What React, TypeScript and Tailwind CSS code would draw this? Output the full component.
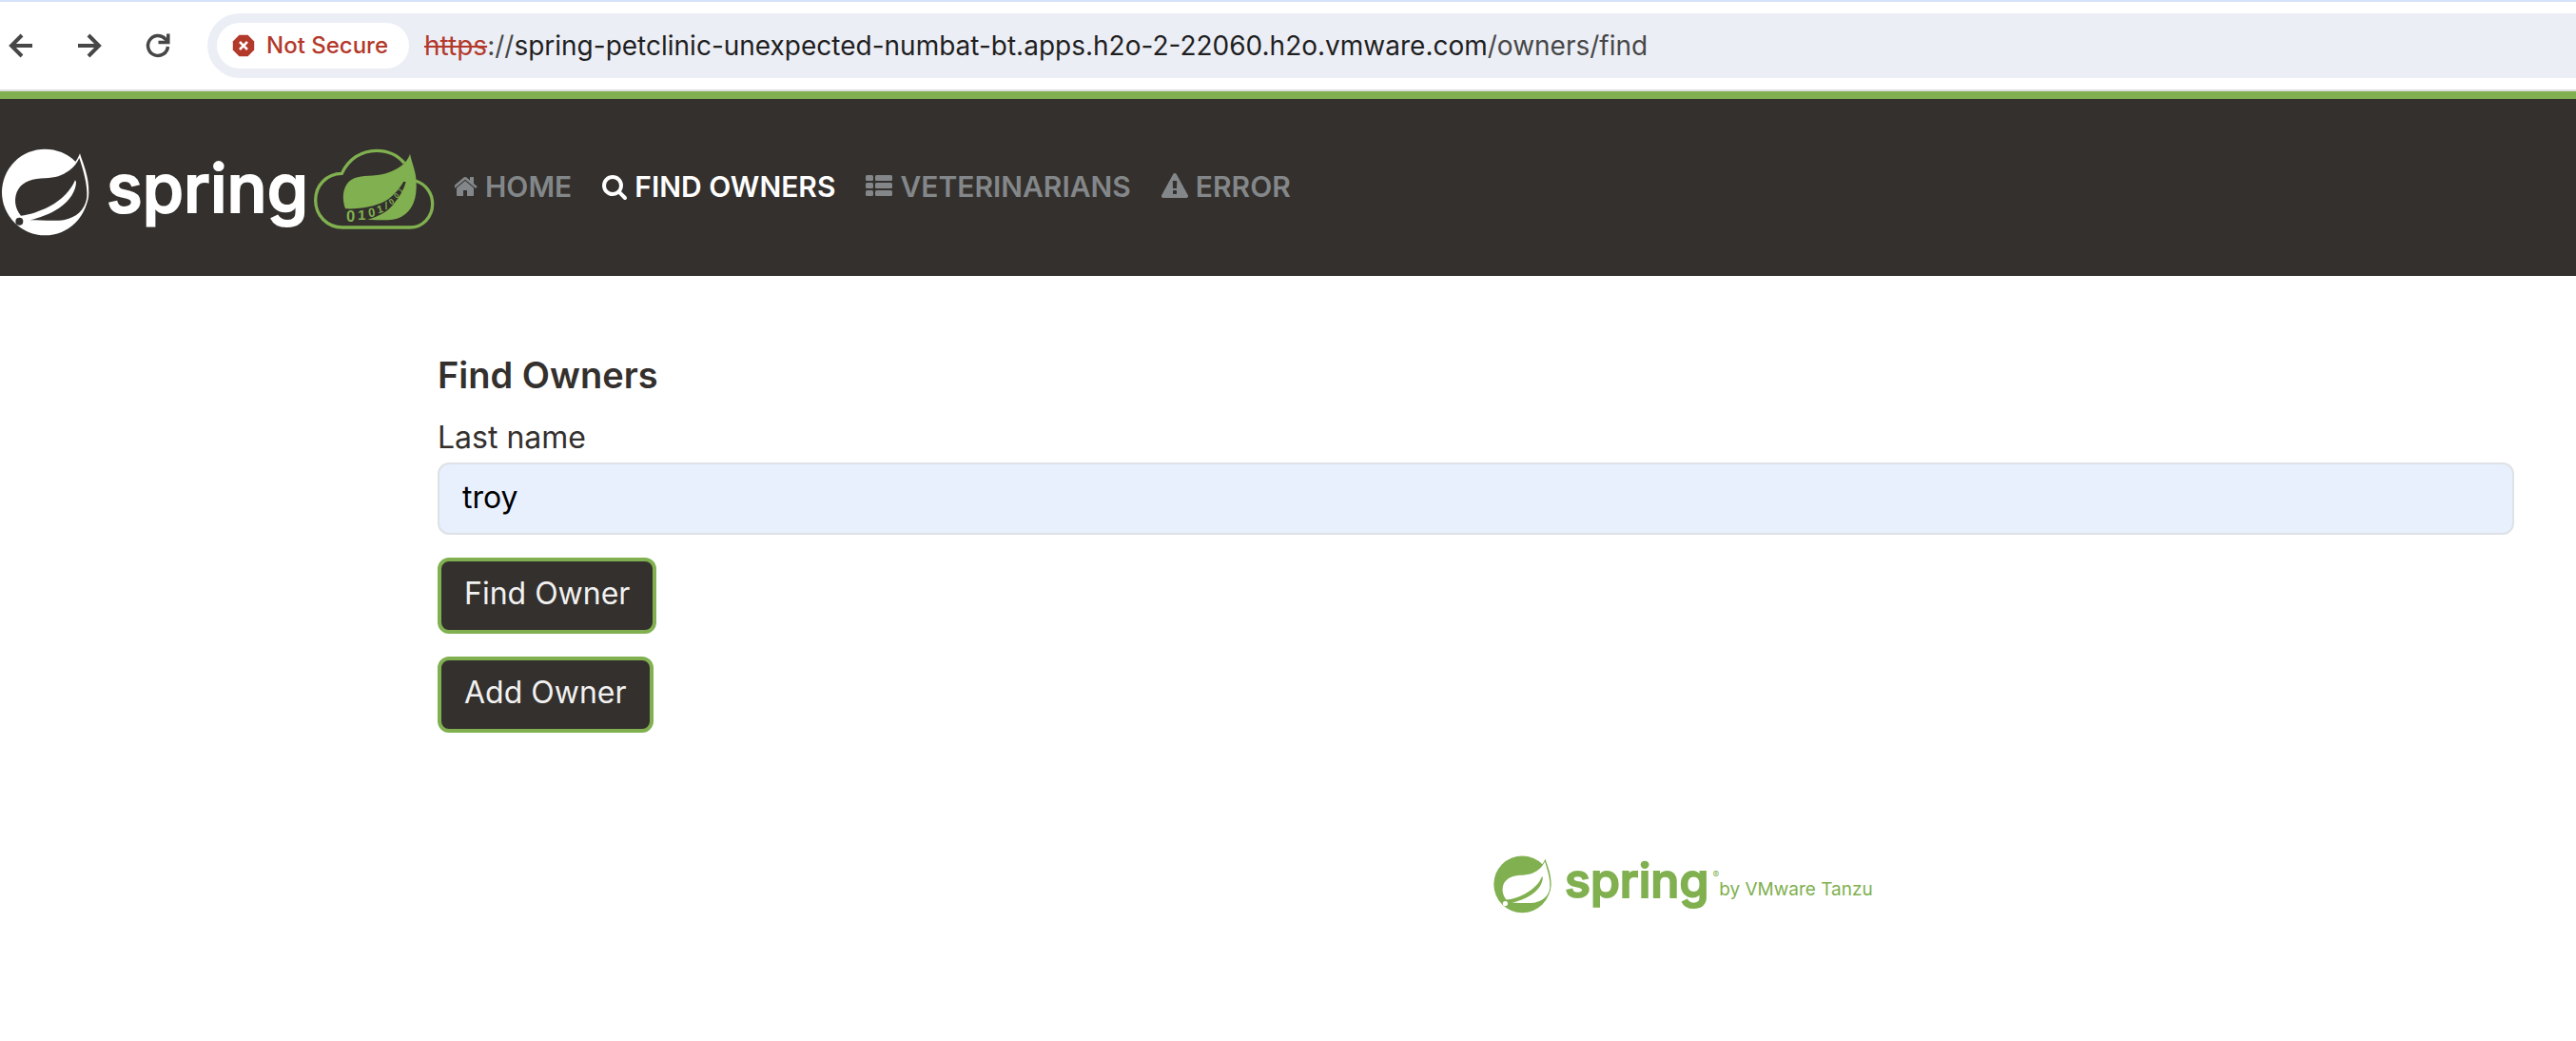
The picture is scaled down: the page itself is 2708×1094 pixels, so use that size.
import React from "react";

type LeafProps = { className?: string; hollow: string };

function SpringLeaf({ className, hollow }: LeafProps) {
  return (
    <svg viewBox="0 0 300 300" className={className} aria-hidden="true">
      <circle cx="142" cy="156" r="136" fill="currentColor" />
      <path
        d="M252 34C262 66 281 106 280 158C280 190 262 220 240 240L180 150L236 62C243 54 248 44 252 34Z"
        fill="currentColor"
      />
      <path
        className={hollow}
        d="M250 48C244 62 234 76 218 88C196 104 174 111 142 112C104 112 74 122 58 146C42 172 46 206 66 230C92 228 122 218 154 202C196 180 224 150 237 118L240 124C240 150 222 182 186 206C156 226 124 236 94 244C130 244 176 248 204 243C240 236 269 212 274 172C277 134 262 84 250 48Z"
      />
      <circle className={hollow} cx="61" cy="248" r="12" />
    </svg>
  );
}

function CloudLeaf() {
  return (
    <svg viewBox="0 0 405 300" className="h-[100px] w-[135px] shrink-0 text-[#80b04f]" aria-hidden="true">
      <g fill="none" stroke="currentColor" strokeWidth="10">
        <path d="M300 64C278 38 246 25 212 25C164 25 124 52 103 97C56 97 20 134 20 181C20 230 57 267 105 267H318C358 267 389 234 389 193C389 157 366 130 336 120" />
      </g>
      <path
        fill="currentColor"
        d="M318 35C323 62 337 88 338 124C340 180 326 214 290 234C262 248 224 244 184 242C220 232 246 218 266 194C286 170 298 148 305 124L298 122C284 146 268 166 240 184C206 202 160 210 114 208C104 180 104 146 124 124C146 102 178 106 214 102C252 98 306 76 318 35Z"
      />
      <g
        fill="currentColor"
        fontFamily='"Liberation Sans", sans-serif'
        fontWeight="700"
        textAnchor="middle"
      >
        <text x="131" y="249" fontSize="50">0</text>
        <text x="166" y="243" fontSize="46">1</text>
        <text x="199" y="233" fontSize="39" transform="rotate(-8 199 233)">0</text>
        <text x="227" y="221" fontSize="34" transform="rotate(-16 227 221)">1</text>
        <text x="245" y="209" fontSize="32" transform="rotate(-12 245 209)">/</text>
        <text x="265" y="193" fontSize="26" transform="rotate(-34 265 193)">0</text>
        <text x="281" y="173" fontSize="23" transform="rotate(-42 281 173)">0</text>
        <text x="293" y="154" fontSize="18" transform="rotate(-50 293 154)">1</text>
      </g>
    </svg>
  );
}

const navItems = [
  {
    label: "HOME",
    active: false,
    icon: (
      <svg viewBox="128 0 1536 1792" className="h-7 w-6" fill="currentColor" aria-hidden="true">
        <path d="M1408 992v480q0 26-19 45t-45 19h-384v-384h-256v384h-384q-26 0-45-19t-19-45v-480q0-1 .5-3t.5-3l575-474 575 474q1 2 1 6zm223-69l-62 74q-8 9-21 11h-3q-13 0-21-7l-692-577-692 577q-12 8-24 7-13-2-21-11l-62-74q-8-10-7-23.5t11-21.5l719-599q32-26 76-26t76 26l244 204v-195q0-14 9-23t23-9h192q14 0 23 9t9 23v408l219 182q10 8 11 21.5t-7 23.5z" />
      </svg>
    ),
  },
  {
    label: "FIND OWNERS",
    active: true,
    icon: (
      <svg viewBox="64 0 1664 1792" className="h-7 w-[26px]" fill="currentColor" aria-hidden="true">
        <path d="M1216 832q0-185-131.500-316.500t-316.500-131.500-316.500 131.500-131.500 316.500 131.500 316.500 316.500 131.500 316.500-131.500 131.500-316.500zm512 832q0 52-38 90t-90 38q-54 0-90-38l-343-342q-179 124-399 124-143 0-273.500-55.500t-225-150-150-225-55.500-273.500 55.500-273.500 150-225 225-150 273.500-55.500 273.500 55.500 225 150 150 225 55.500 273.500q0 220-124 399l343 343q37 37 37 90z" />
      </svg>
    ),
  },
  {
    label: "VETERINARIANS",
    active: false,
    icon: (
      <svg viewBox="0 0 1792 1792" className="size-7" fill="currentColor" aria-hidden="true">
        {[128, 640, 1152].map((y) => (
          <g key={y}>
            <rect x="0" y={y} width="512" height="384" rx="96" />
            <rect x="640" y={y} width="1152" height="384" rx="96" />
          </g>
        ))}
      </svg>
    ),
  },
  {
    label: "ERROR",
    active: false,
    icon: (
      <svg viewBox="0 0 1792 1792" className="size-7" fill="currentColor" aria-hidden="true">
        <path d="M1024 1375v-190q0-14-9.500-23.500t-22.500-9.500h-192q-13 0-22.500 9.500t-9.500 23.500v190q0 14 9.500 23.500t22.500 9.500h192q13 0 22.500-9.500t9.500-23.500zm-2-374l18-459q0-12-10-19-13-11-24-11h-220q-11 0-24 11-10 7-10 21l17 457q0 10 10 16.500t24 6.500h185q14 0 23.500-6.500t10.500-16.500zm-14-934l768 1408q35 63-2 126-17 29-46.500 46t-63.500 17h-1536q-34 0-63.500-17t-46.500-46q-37-63-2-126l768-1408q17-31 47-49t65-18 65 18 47 49z" />
      </svg>
    ),
  },
];

function BrowserBar() {
  return (
    <div className="flex items-center border-t-2 border-b-2 border-t-[#d6e2fb] border-b-[#dedede] bg-white py-3">
      <div className="flex w-[218px] shrink-0 items-center gap-9 pl-1 text-[#474747]">
        <button type="button" aria-label="Back">
          <svg viewBox="0 0 36 36" className="size-9" fill="none" stroke="currentColor" strokeWidth="4">
            <path d="M30 18H8M19 7L8 18L19 29" />
          </svg>
        </button>
        <button type="button" aria-label="Forward">
          <svg viewBox="0 0 36 36" className="size-9" fill="none" stroke="currentColor" strokeWidth="4">
            <path d="M6 18H28M17 7L28 18L17 29" />
          </svg>
        </button>
        <button type="button" aria-label="Reload">
          <svg viewBox="0 0 36 36" className="size-9" fill="none" stroke="currentColor" strokeWidth="3.500">
            <path d="M28.500 19A10.500 10.500 0 1 1 25.600 10.700L28 13" />
            <path d="M28.800 5.500V14.500H18.500" />
          </svg>
        </button>
      </div>
      <div className="flex h-[68px] flex-1 items-center rounded-l-full bg-[#eceef6] pl-[10px]">
        <button
          type="button"
          className="flex h-12 w-[202px] shrink-0 items-center gap-3 rounded-full bg-white pl-4 text-[24px] leading-8 font-medium whitespace-nowrap text-[#b3392b]"
        >
          <svg viewBox="0 0 24 24" className="size-6 shrink-0" aria-hidden="true">
            <path d="M7.500 .8H16.500L23.200 7.500V16.500L16.500 23.200H7.500L.8 16.500V7.500Z" fill="currentColor" />
            <path d="M8 8L16 16M16 8L8 16" stroke="white" strokeWidth="2.600" />
          </svg>
          Not Secure
        </button>
        <div className="ml-4 text-[28px] leading-9 whitespace-nowrap text-[#1f1f1f]">
          <span className="text-[#b3392b] line-through">https</span>
          <span className="text-[#474747]">://</span>
          spring-petclinic-unexpected-numbat-bt.apps.h2o-2-22060.h2o.vmware.com
          <span className="text-[#474747]">/owners/find</span>
        </div>
      </div>
    </div>
  );
}

function SiteHeader() {
  return (
    <header className="flex items-start border-t-8 border-[#80b04f] bg-[#34302d] pt-[46px] pb-10">
      <a href="#" className="flex items-start text-white">
        <SpringLeaf className="size-[100px] shrink-0" hollow="fill-[#34302d]" />
        <span className="mt-2 ml-3 w-[213px] text-[70px] leading-[80px] font-medium [-webkit-text-stroke:2px_white]">
          spring
        </span>
        <CloudLeaf />
      </a>
      <nav className="mt-7 ml-[18px] flex gap-8">
        {navItems.map((item) => (
          <a
            key={item.label}
            href="#"
            className={
              item.active
                ? "flex items-center gap-2 text-[30px] leading-9 font-semibold whitespace-nowrap text-white"
                : "flex items-center gap-2 text-[30px] leading-9 font-semibold whitespace-nowrap text-[#838789]"
            }
          >
            {item.icon}
            {item.label}
          </a>
        ))}
      </nav>
    </header>
  );
}

const buttonClass =
  "rounded-xl border-4 border-[#80b04f] bg-[#34302d] px-6 pt-[14px] pb-[18px] text-[32px] leading-10 text-[#f1f1f1]";

export default function App() {
  return (
    <div className="min-h-screen bg-white font-['Inter',sans-serif] text-[#34302d]">
      <BrowserBar />
      <SiteHeader />
      <main className="pt-[82px] pr-[65px] pl-[460px]">
        <h2 className="mb-6 text-[38px] leading-[44px] font-semibold">Find Owners</h2>
        <form className="flex flex-col items-start" onSubmit={(e) => e.preventDefault()}>
          <label htmlFor="lastName" className="mb-[6px] text-[32px] leading-10">
            Last name
          </label>
          <input
            id="lastName"
            type="text"
            defaultValue="troy"
            className="mb-6 h-[76px] w-full rounded-xl border-2 border-[#dee2e6] bg-[#e8effd] px-6 pt-[14px] pb-[18px] text-[32px] leading-10 text-black"
          />
          <button type="submit" className={buttonClass}>
            Find Owner
          </button>
          <button type="button" className={buttonClass + " mt-6"}>
            Add Owner
          </button>
        </form>
        <footer className="mt-[125px] ml-[50.8%] flex items-start text-[#80b04f]">
          <SpringLeaf className="size-[66px] shrink-0" hollow="fill-white" />
          <span className="ml-[10px] text-[50px] leading-[60px] font-medium [-webkit-text-stroke:2px_#80b04f]">
            spring
          </span>
          <span className="mt-4 ml-1 text-[10px] leading-4">®</span>
          <span className="mt-7 text-[19px] leading-6 whitespace-nowrap">by VMware Tanzu</span>
        </footer>
      </main>
    </div>
  );
}
